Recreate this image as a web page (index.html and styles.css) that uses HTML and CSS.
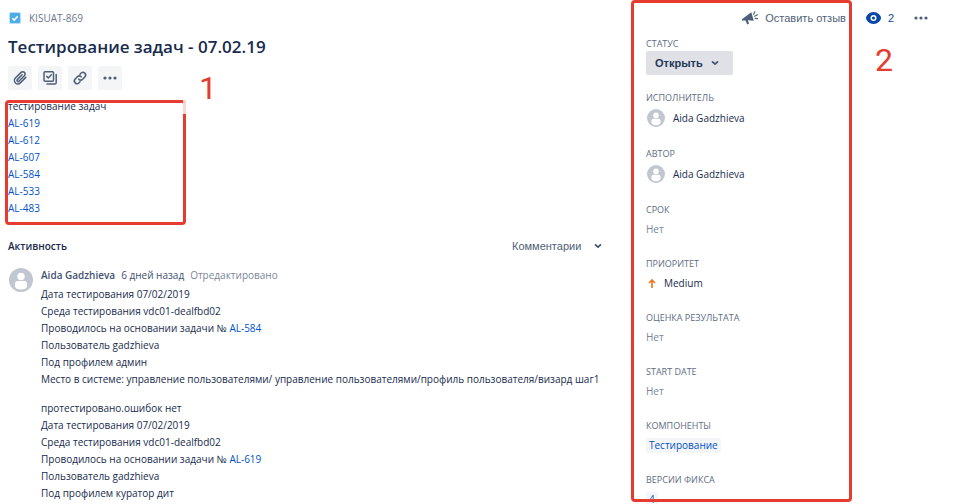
FILE: index.html
```html
<!DOCTYPE html>
<html lang="ru">

<head>
    <meta charset="UTF-8">
    <meta name="viewport" content="width=device-width, initial-scale=1.0">
    <title>KISUAT-869</title>
    <link rel="stylesheet" href="styles.css">
</head>

<body>
    <!-- Shared shapes -->
    <svg class="sprite" aria-hidden="true">
        <symbol id="avatar" viewBox="0 0 24 24">
            <circle cx="12" cy="12" r="12" fill="#c1c7d0"/>
            <circle cx="12" cy="8.5" r="3.7" fill="#fff"/>
            <path d="M6 15.5a2.5 2.5 0 0 1 2.5-2.5h7a2.5 2.5 0 0 1 2.5 2.5v2.7c0 2-2.7 3.300-6 3.300s-6-1.300-6-3.300z" fill="#fff"/>
        </symbol>
        <symbol id="chevron" viewBox="0 0 8 8">
            <path d="M1.500 2.800 4 5.200l2.500-2.400" fill="none" stroke="currentColor" stroke-width="1.700" stroke-linecap="round" stroke-linejoin="round"/>
        </symbol>
        <symbol id="dots" viewBox="0 0 14 4">
            <circle cx="2" cy="2" r="1.600" fill="currentColor"/>
            <circle cx="7" cy="2" r="1.600" fill="currentColor"/>
            <circle cx="12" cy="2" r="1.600" fill="currentColor"/>
        </symbol>
    </svg>

    <div class="page">
        <!-- Issue -->
        <main class="issue">
            <div class="breadcrumb">
                <svg width="12" height="12" viewBox="0 0 12 12" aria-hidden="true">
                    <rect width="12" height="12" rx="1.500" fill="#b9dff7"/>
                    <rect x="1" y="1" width="10" height="10" rx="1" fill="#4bade8"/>
                    <path d="M3.300 6.200l1.900 1.900 3.500-3.900" fill="none" stroke="#fff" stroke-width="1.600"/>
                </svg>
                <a href="#">KISUAT-869</a>
            </div>

            <h1>Тестирование задач - 07.02.19</h1>

            <div class="toolbar">
                <button type="button" aria-label="Прикрепить">
                    <svg width="16" height="16" viewBox="0 0 16 16" fill="none" stroke="currentColor" stroke-width="1.500" stroke-linecap="round">
                        <path d="M13.800 7.400 8.300 12.900a3.400 3.400 0 0 1-4.900-4.800l5.700-5.700a2.300 2.300 0 0 1 3.300 3.300l-5.500 5.500a1.100 1.100 0 0 1-1.600-1.600l4.800-4.800"/>
                    </svg>
                </button>
                <button type="button" aria-label="Подзадача">
                    <svg width="16" height="16" viewBox="0 0 16 16" fill="none" stroke="currentColor" stroke-width="1.500" stroke-linecap="round" stroke-linejoin="round">
                        <rect x="2" y="1.800" width="9.500" height="9.500" rx="1"/>
                        <path d="M4.800 6.400l1.600 1.600 2.900-3.200M14.200 4.500v8.200a1.300 1.300 0 0 1-1.300 1.300H5"/>
                    </svg>
                </button>
                <button type="button" aria-label="Ссылка">
                    <svg width="16" height="16" viewBox="0 0 16 16" fill="none" stroke="currentColor" stroke-width="1.600" stroke-linecap="round">
                        <path d="M6.800 9.200a2.700 2.700 0 0 0 3.800 0l2.400-2.400a2.700 2.700 0 0 0-3.800-3.800L8 4.200"/>
                        <path d="M9.200 6.800a2.700 2.700 0 0 0-3.800 0L3 9.200A2.700 2.700 0 0 0 6.800 13L8 11.800"/>
                    </svg>
                </button>
                <button type="button" aria-label="Ещё">
                    <svg width="14" height="4"><use href="#dots"/></svg>
                </button>
                <span class="mark mark-one">1</span>
            </div>

            <div class="description">
                <p>тестирование задач</p>
                <p><a href="#">AL-619</a></p>
                <p><a href="#">AL-612</a></p>
                <p><a href="#">AL-607</a></p>
                <p><a href="#">AL-584</a></p>
                <p><a href="#">AL-533</a></p>
                <p><a href="#">AL-483</a></p>
                <div class="frame frame-description"></div>
            </div>

            <!-- Activity -->
            <div class="activity-header">
                <h2>Активность</h2>
                <div class="dropdown">
                    <select aria-label="Показать">
                        <option>Комментарии</option>
                    </select>
                    <svg width="8" height="8"><use href="#chevron"/></svg>
                </div>
            </div>

            <article class="comment">
                <svg class="comment-avatar" width="24" height="24"><use href="#avatar"/></svg>
                <div class="comment-body">
                    <div class="comment-meta">
                        <span class="author">Aida Gadzhieva</span>
                        <span>6 дней назад</span>
                        <span class="edited">Отредактировано</span>
                    </div>
                    <p>
                        Дата тестирования 07/02/2019<br>
                        Среда тестирования vdc01-dealfbd02<br>
                        Проводилось на основании задачи № <a href="#">AL-584</a><br>
                        Пользователь gadzhieva<br>
                        Под профилем админ<br>
                        Место в системе: управление пользователями/ управление пользователями/профиль пользователя/визард шаг1
                    </p>
                    <p>
                        протестировано.ошибок нет<br>
                        Дата тестирования 07/02/2019<br>
                        Среда тестирования vdc01-dealfbd02<br>
                        Проводилось на основании задачи № <a href="#">AL-619</a><br>
                        Пользователь gadzhieva<br>
                        Под профилем куратор дит
                    </p>
                </div>
            </article>
        </main>

        <!-- Details -->
        <aside class="details">
            <div class="actions">
                <button type="button" class="feedback">
                    <svg width="16" height="16" viewBox="0 0 16 16" aria-hidden="true">
                        <path d="M9.300 2.300 11.800 10.800 6 10.200v.300l1 3.300-1.800.600-1.700-3.900-2.300.100a.800.800 0 0 1-.600-1.900z" fill="#505f79"/>
                        <path d="M11.600 4.200l1.300-2.400M12.600 6.200l2.800-1.400M13.200 8.300l2.500.300" fill="none" stroke="#505f79" stroke-width="1.200" stroke-linecap="round"/>
                    </svg>
                    Оставить отзыв
                </button>
                <button type="button" class="watch" aria-label="Наблюдатели: 2">
                    <svg width="15" height="12" viewBox="0 0 15 12" aria-hidden="true">
                        <path d="M7.500 0C3.500 0 0 3.500 0 6s3.500 6 7.500 6S15 8.500 15 6s-3.500-6-7.500-6z" fill="#0747a6"/>
                        <circle cx="7.500" cy="6" r="2.300" fill="none" stroke="#fff" stroke-width="1.500"/>
                    </svg>
                    2
                </button>
                <button type="button" class="more" aria-label="Действия">
                    <svg width="14" height="4"><use href="#dots"/></svg>
                </button>
                <span class="mark mark-two">2</span>
            </div>

            <div class="fields">
                <div class="field">
                    <label for="status">СТАТУС</label>
                    <div class="value">
                        <div class="dropdown status">
                            <select id="status">
                                <option>Открыть</option>
                            </select>
                            <svg width="8" height="8"><use href="#chevron"/></svg>
                        </div>
                    </div>
                </div>
                <div class="field">
                    <h3>ИСПОЛНИТЕЛЬ</h3>
                    <div class="value person"><svg width="18" height="18"><use href="#avatar"/></svg>Aida Gadzhieva</div>
                </div>
                <div class="field">
                    <h3>АВТОР</h3>
                    <div class="value person"><svg width="18" height="18"><use href="#avatar"/></svg>Aida Gadzhieva</div>
                </div>
                <div class="field">
                    <h3>СРОК</h3>
                    <div class="value empty">Нет</div>
                </div>
                <div class="field">
                    <h3>ПРИОРИТЕТ</h3>
                    <div class="value priority">
                        <svg width="12" height="12" viewBox="0 0 12 12" aria-hidden="true">
                            <path d="M6 11V3M3 6l3-3 3 3" fill="none" stroke="#ea7d24" stroke-width="1.700"/>
                        </svg>
                        Medium
                    </div>
                </div>
                <div class="field">
                    <h3>ОЦЕНКА РЕЗУЛЬТАТА</h3>
                    <div class="value empty">Нет</div>
                </div>
                <div class="field">
                    <h3>START DATE</h3>
                    <div class="value empty">Нет</div>
                </div>
                <div class="field">
                    <h3>КОМПОНЕНТЫ</h3>
                    <div class="value"><a class="tag" href="#">Тестирование</a></div>
                </div>
                <div class="field">
                    <h3>ВЕРСИИ ФИКСА</h3>
                    <div class="value"><a class="tag" href="#">4</a></div>
                </div>
            </div>
            <div class="frame frame-details"></div>
        </aside>
    </div>
</body>

</html>
```

FILE: styles.css
```css
* {
    box-sizing: border-box;
}

body {
    margin: 0;
    font-family: "Open Sans", "Noto Sans", sans-serif;
    font-size: 10px;
    line-height: 17px;
    color: #172b4d;
    background-color: #fff;
}

h1, h2, h3, p {
    margin: 0;
}

a {
    color: #0052cc;
    text-decoration: none;
}

svg {
    display: block;
    flex: none;
}

button, select {
    padding: 0;
    border: 0;
    background: none;
    font-family: "Liberation Sans", Arial, sans-serif;
    font-size: 11px;
    color: #505f79;
    cursor: pointer;
}

.sprite {
    position: absolute;
    width: 0;
    height: 0;
}

.page {
    display: grid;
    grid-template-columns: minmax(0, 1fr) 311px;
    grid-template-rows: minmax(0, 1fr);
    gap: 36px;
    height: 100vh;
    padding: 8px 8px 0;
    overflow: hidden;
}

/* Issue */
.breadcrumb {
    display: flex;
    align-items: center;
    gap: 8px;
    height: 20px;
    padding-left: 1px;
}

.breadcrumb a {
    color: #6b778c;
}

h1 {
    margin: 7px 0;
    font-size: 17px;
    font-weight: 600;
    line-height: 24px;
}

.toolbar {
    position: relative;
    display: flex;
    gap: 6px;
}

.toolbar button {
    display: flex;
    align-items: center;
    justify-content: center;
    width: 24px;
    height: 24px;
    border-radius: 2px;
    background-color: #f4f5f7;
}

.description {
    position: relative;
    margin-top: 8px;
}

/* Activity */
.activity-header {
    display: flex;
    align-items: center;
    justify-content: space-between;
    height: 24px;
    margin-top: 17px;
    padding-right: 8px;
}

h2 {
    font-size: 10px;
    font-weight: 600;
}

.dropdown {
    display: grid;
    align-items: center;
}

.dropdown select {
    grid-area: 1 / 1;
    padding-right: 20px;
    appearance: none;
}

.dropdown svg {
    grid-area: 1 / 1;
    justify-self: end;
    color: #42526e;
    pointer-events: none;
}

.comment {
    display: flex;
    gap: 8px;
    margin-top: 9px;
    padding-left: 1px;
}

.comment-avatar {
    margin-top: 1px;
}

.comment-meta {
    display: flex;
    gap: 6px;
    margin-bottom: 2px;
    color: #42526e;
}

.author {
    font-weight: 600;
}

.edited {
    color: #7a869a;
}

.comment-body p + p {
    margin-top: 12px;
}

/* Details */
.details {
    position: relative;
}

.actions {
    position: relative;
    display: flex;
    align-items: center;
    justify-content: flex-end;
    gap: 20px;
    height: 20px;
    padding-right: 29px;
}

.feedback, .watch {
    display: flex;
    align-items: center;
    gap: 7px;
}

.watch {
    color: #0747a6;
}

.fields {
    display: flex;
    flex-direction: column;
    gap: 15px;
    margin-top: 8px;
}

.field label, .field h3 {
    display: block;
    font-size: 9px;
    font-weight: 400;
    line-height: 15px;
    color: #5e6c84;
}

.value {
    display: flex;
    align-items: center;
    height: 24px;
}

.person {
    gap: 8px;
    height: 26px;
    padding-left: 1px;
}

.priority {
    gap: 6px;
}

.empty {
    color: #7a869a;
}

.status {
    border-radius: 2px;
    background-color: #dfe1e6;
}

.status select {
    height: 24px;
    padding: 0 30px 0 9px;
    font-weight: bold;
    color: #253858;
}

.status svg {
    margin-right: 14px;
}

.tag {
    padding: 0 3px;
    border-radius: 2px;
    background-color: #f4f5f7;
    line-height: 15px;
}

/* Red frames and numbers over the page */
.frame {
    position: absolute;
    border: 3px solid #e53b30;
    border-radius: 4px;
    pointer-events: none;
}

.frame-description {
    top: 2px;
    left: -3px;
    width: 181px;
    height: 125px;
}

.frame-description::after {
    content: "";
    position: absolute;
    top: -3px;
    right: -3px;
    width: 3px;
    height: 14px;
    background-color: #fbd5d3;
}

.frame-details {
    top: -8px;
    bottom: 2px;
    left: -15px;
    width: 221px;
}

.mark {
    position: absolute;
    font-family: Roboto, Arial, sans-serif;
    font-size: 32px;
    line-height: 32px;
    color: #e53b30;
}

.mark-one {
    top: 6px;
    left: 191px;
}

.mark-two {
    top: 36px;
    left: 229px;
}
```
